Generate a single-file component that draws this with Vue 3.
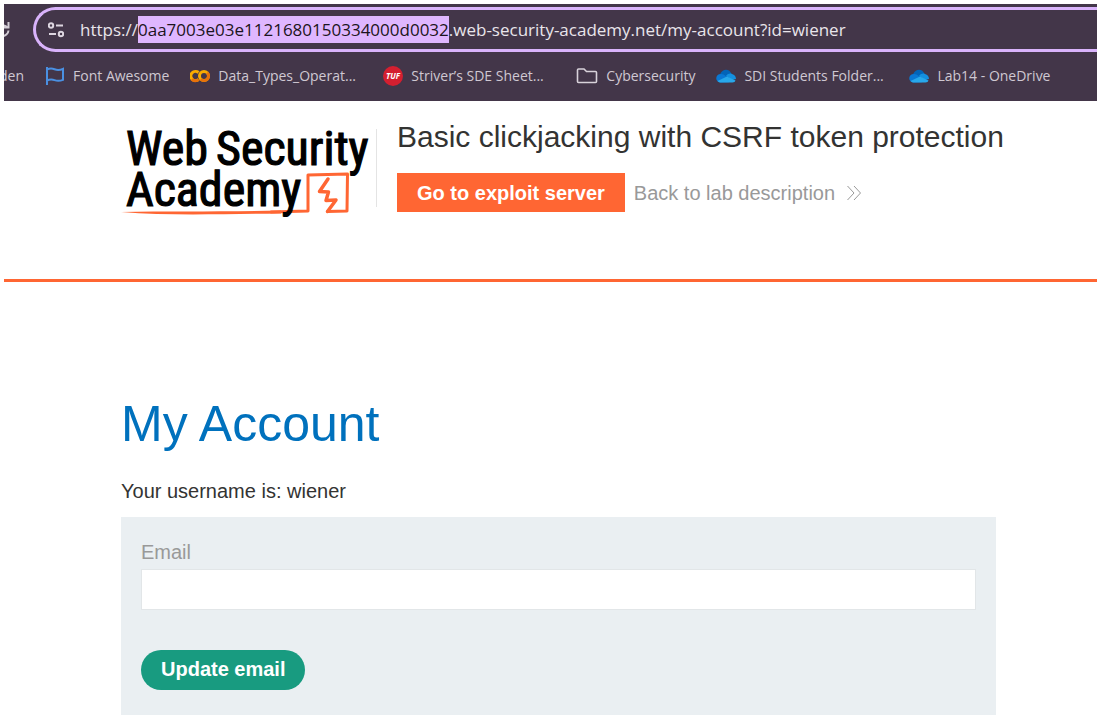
<script setup>
import { onMounted, ref } from 'vue'

const address = ref('https://0aa7003e03e1121680150334000d0032.web-security-academy.net/my-account?id=wiener')
const addressField = ref(null)
const email = ref('')

const bookmarks = [
  { icon: 'flag', label: 'Font Awesome' },
  { icon: 'colab', label: 'Data_Types_Operat...', full: true },
  { icon: 'tuf', label: 'Striver’s SDE Sheet...', full: true },
  { icon: 'folder', label: 'Cybersecurity' },
  { icon: 'cloud', label: 'SDI Students Folder...', full: true },
  { icon: 'cloud', label: 'Lab14 - OneDrive' },
]

// Select the lab identifier inside the address
onMounted(() => {
  const start = address.value.indexOf('//') + 2
  const end = address.value.indexOf('.')
  addressField.value.focus()
  addressField.value.setSelectionRange(start, end)
})
</script>

<template>
  <div class="page">
    <header class="browser">
      <div class="toolbar">
        <button class="reload" type="button" aria-label="Reload">
          <svg width="16" height="18" viewBox="0 0 16 18" fill="none" stroke="#d3cdd6" stroke-width="2">
            <path d="M14.500 9.500A6 6 0 0 1 8 15M14.500 1V6.500H9M9 4.500q2.500 0 4.500 2" />
          </svg>
        </button>
        <div class="address">
          <button class="site" type="button" aria-label="View site information">
            <svg width="16" height="16" viewBox="0 0 16 16" fill="none" stroke="#ddd6e0" stroke-width="2">
              <circle cx="3" cy="3.500" r="2.200" />
              <path d="M8 3.500h7M1 12h7" />
              <circle cx="13" cy="12" r="2.200" />
            </svg>
          </button>
          <input ref="addressField" v-model="address" class="url" type="text" aria-label="Address" spellcheck="false" />
        </div>
      </div>
      <nav class="bookmarks">
        <a class="bookmark first" href="#"><span>den</span></a>
        <a v-for="b in bookmarks" :key="b.label" class="bookmark" :class="{ full: b.full }" href="#">
          <svg v-if="b.icon === 'flag'" width="20" height="20" viewBox="0 0 20 20" fill="none" stroke="#4a90e2" stroke-width="2">
            <path d="M2 1v18M2 3.500c3-1.500 5-1.300 7.500-.3s5 1.200 8.500-.4v11c-3.500 1.500-6 1.300-8.500.3S5 13 2 14.500" />
          </svg>
          <svg v-else-if="b.icon === 'colab'" width="20" height="20" viewBox="0 0 20 20" fill="none" stroke-width="3">
            <path d="M8.500 6.500A4.600 4.600 0 1 0 8.500 13.500" stroke="#f9ab00" />
            <circle cx="14" cy="10" r="4.500" stroke="#f9ab00" />
            <path d="M17.200 6.800A4.500 4.500 0 0 1 10.800 13.200M1.800 13.200A4.500 4.500 0 0 0 8.500 13.500" stroke="#e8710a" />
          </svg>
          <svg v-else-if="b.icon === 'tuf'" width="20" height="20" viewBox="0 0 20 20">
            <circle cx="10" cy="10" r="10" fill="#d41f30" />
            <text x="10" y="13" class="tuf-text" text-anchor="middle">TUF</text>
          </svg>
          <svg v-else-if="b.icon === 'folder'" width="22" height="20" viewBox="0 0 22 20" fill="none" stroke="#d8d2da" stroke-width="1.600">
            <path d="M1.500 15.500V4q0-1 1-1h5.500L10.500 5.500h9q1 0 1 1V15.500q0 1-1 1H2.500Q1.500 16.500 1.500 15.500z" />
          </svg>
          <svg v-else width="20" height="20" viewBox="0 0 20 20">
            <path d="M4 8.500C6 2.500 13.500 2 15.500 8L10 12z" fill="#0364b8" />
            <path d="M4.500 16.500C-1.500 16-1 8 5 8c2 0 3 .8 5 2.200l3 6z" fill="#0a78d4" />
            <path d="M10 10c2-2.500 4-2.800 6-2 2.500.6 4 2.500 4 5L16 14z" fill="#1490df" />
            <path d="M1.500 15L11 10.500l8.500 4Q19 16.500 16.500 16.500h-12Q3 16.500 1.500 15z" fill="#28a8ea" />
          </svg>
          <span>{{ b.label }}</span>
        </a>
      </nav>
    </header>

    <section class="banner">
      <svg class="logo" width="250" height="90" viewBox="0 0 250 90" role="img" aria-label="Web Security Academy">
        <g fill="none" stroke="#ff6633" stroke-linecap="round" stroke-linejoin="round">
          <path d="M150 83L187 82 187 46 226.500 45 226 82 206.500 82.500" stroke-width="3" />
          <path d="M206.500 82.500L215 71 205 71.500 207.500 63 198.500 62.500 207 50" stroke-width="3.500" />
        </g>
        <path d="M0 83C50 82 100 83 160 81.500v3C100 85 50 87 0 83z" fill="#ff6633" />
        <g class="logo-text">
          <text x="5" y="36">Web</text>
          <text x="95" y="36">Security</text>
          <text x="5" y="77">Academy</text>
        </g>
      </svg>
      <div class="lab">
        <h2>Basic clickjacking with CSRF token protection</h2>
        <div class="actions">
          <button class="exploit" type="button">Go to exploit server</button>
          <a class="back" href="#">
            <span>Back to lab description</span>
            <svg width="16" height="16" viewBox="0 0 16 16" fill="none" stroke="#999" stroke-width="1">
              <path d="M1.500 1L8 8 1.500 15M8 1l6.500 7L8 15" />
            </svg>
          </a>
        </div>
      </div>
    </section>

    <main class="account">
      <h1>My Account</h1>
      <p>Your username is: wiener</p>
      <form @submit.prevent>
        <label for="email">Email</label>
        <input id="email" v-model="email" type="email" />
        <button type="submit">Update email</button>
      </form>
    </main>
  </div>
</template>

<style>
body {
  background: #fff;
}
</style>

<style scoped>
.page {
  padding: 4px;
  font-family: "Liberation Sans", Arial, sans-serif;
  color: #333332;
}
button {
  border: 0;
  margin: 0;
  cursor: pointer;
}
svg {
  display: block;
  flex: none;
}
.browser {
  background: #433649;
  overflow: hidden;
  font-family: "Open Sans", "Noto Sans", sans-serif;
}
.toolbar {
  display: flex;
  align-items: center;
  padding-top: 3px;
}
.reload {
  width: 29px;
  padding: 0 23px 0 0;
  background: none;
  display: flex;
  justify-content: flex-end;
  box-sizing: border-box;
}
.address {
  flex: 1;
  display: flex;
  align-items: center;
  gap: 16px;
  height: 45px;
  box-sizing: border-box;
  border: 3px solid #d9b3fb;
  border-right: 0;
  border-radius: 23px 0 0 23px;
  padding-left: 12px;
}
.site {
  padding: 0;
  background: none;
}
.url {
  flex: 1;
  min-width: 0;
  padding: 0;
  border: 0;
  outline: 0;
  background: none;
  color: #e9e5eb;
  font-family: inherit;
  font-size: 17px;
  line-height: 27px;
}
.url::selection {
  background: #dfb6ff;
  color: #1c1420;
}
.bookmarks {
  display: flex;
  gap: 21px;
  height: 49px;
  padding-bottom: 2px;
  box-sizing: border-box;
  align-items: center;
  white-space: nowrap;
}
.bookmark {
  display: flex;
  align-items: center;
  gap: 8px;
  color: #cfc8d2;
  font-size: 14px;
  text-decoration: none;
}
.bookmark.first {
  margin-left: -5px;
}
.bookmark.full {
  min-width: 172px;
}
.tuf-text {
  font: italic bold 8px "Open Sans", sans-serif;
  fill: #fff;
}
.banner {
  display: flex;
  border-bottom: 3px solid #ff6633;
  padding: 18px 0 60px 117px;
}
.logo {
  margin-top: 10px;
  overflow: visible;
}
.logo-text {
  font-family: "Liberation Sans Narrow", "Roboto Condensed", Roboto, sans-serif;
  font-size: 48px;
  fill: #000;
  stroke: #000;
  stroke-width: 1.2px;
}
.lab {
  margin: 10px 0 0 5px;
  padding-left: 20px;
  border-left: 1px solid #e4e4e4;
  height: 78px;
}
h2 {
  margin: -10px 0 19px;
  font-size: 30px;
  line-height: 35px;
  font-weight: 400;
  white-space: nowrap;
}
.actions {
  display: flex;
  align-items: center;
  gap: 9px;
}
.exploit {
  height: 39px;
  padding: 2px 20px 0;
  background: #ff6633;
  color: #fff;
  font: bold 20px "Liberation Sans", Arial, sans-serif;
}
.back {
  display: flex;
  align-items: center;
  gap: 11px;
  color: #999;
  font-size: 20px;
  line-height: 24px;
  text-decoration: none;
}
.account {
  padding: 114px 101px 0 117px;
}
h1 {
  margin: 0;
  font-size: 50px;
  line-height: 56px;
  font-weight: 400;
  color: #0071bd;
}
p {
  margin: 27px 0 14px;
  font-size: 20px;
  line-height: 24px;
}
form {
  display: flex;
  flex-direction: column;
  align-items: flex-start;
  padding: 23px 20px 25px;
  background: #eaeff2;
}
label {
  font-size: 20px;
  line-height: 24px;
  color: #999;
}
#email {
  width: 100%;
  height: 41px;
  box-sizing: border-box;
  margin: 5px 0 40px;
  padding: 0 10px;
  border: 1px solid #e2e6e8;
  background: #fff;
  font: 20px "Liberation Sans", Arial, sans-serif;
}
form button {
  height: 40px;
  padding: 0 20px 2px;
  border-radius: 20px;
  background: #189b80;
  color: #fff;
  font: bold 20px "Liberation Sans", Arial, sans-serif;
}
</style>
